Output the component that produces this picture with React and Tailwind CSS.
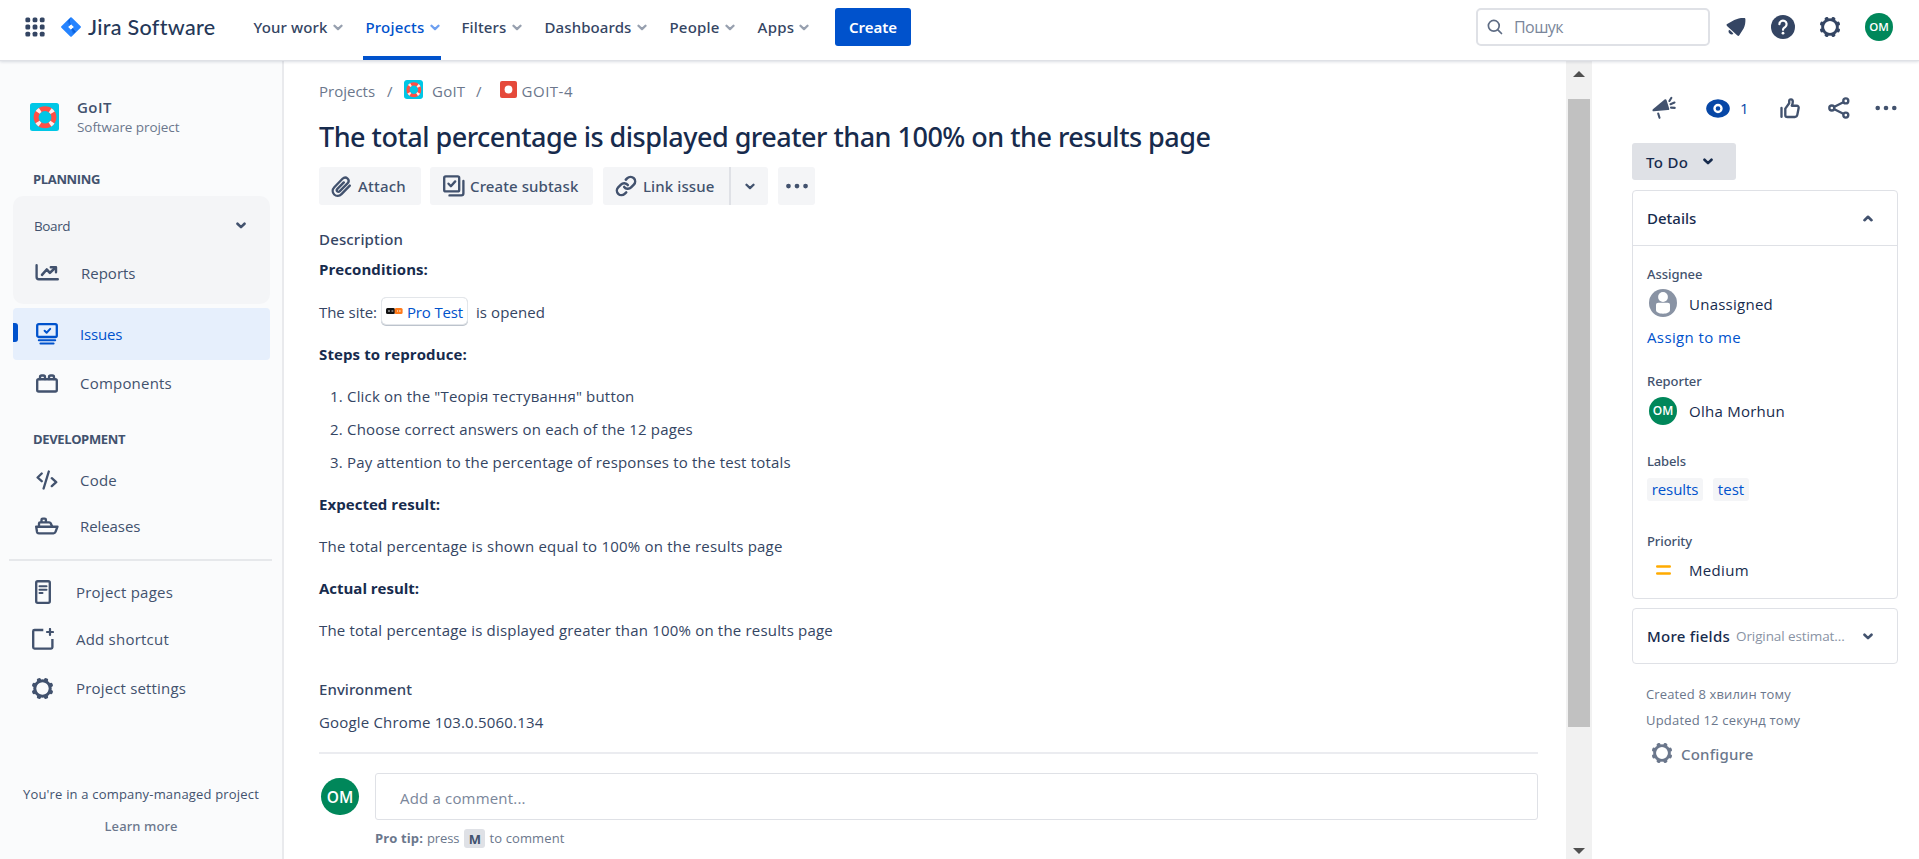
const medium = "font-['Noto_Sans','Open_Sans',sans-serif] font-medium";

function Chevron({ className = "", up = false, strokeWidth = 2.3 }) {
  return (
    <svg width="10" height="7" viewBox="0 0 10 7" fill="none" stroke="currentColor" strokeWidth={strokeWidth} strokeLinecap="round" strokeLinejoin="round" className={`shrink-0 ${className}`}>
      <path d={up ? "M1.5 5.2 5 1.8 8.5 5.2" : "M1.5 1.7 5 5.1 8.5 1.7"} />
    </svg>
  );
}

const teeth = [22.5, 67.5, 112.5, 157.5, 202.5, 247.5, 292.5, 337.5];

function Gear({ size = 22, className = "" }) {
  return (
    <svg width={size} height={size} viewBox="0 0 22 22" fill="none" className={`shrink-0 ${className}`}>
      <circle cx="11" cy="11" r="7.4" stroke="currentColor" strokeWidth="2.9" />
      {teeth.map((a) => (
        <rect key={a} x="9" y="0.5" width="4" height="4.2" rx="1.5" fill="currentColor" transform={`rotate(${a} 11 11)`} />
      ))}
    </svg>
  );
}

function Lifebuoy({ width, height, className = "" }) {
  return (
    <svg width={width} height={height} viewBox="0 0 28 28" preserveAspectRatio="none" className={`shrink-0 ${className}`}>
      <rect width="28" height="28" rx="2.5" fill="#00c7e6" />
      <circle cx="14.5" cy="14.3" r="8.6" fill="none" stroke="#ff4f45" strokeWidth="4.8" />
      <circle cx="14.5" cy="14.3" r="8.6" fill="none" stroke="#ffeeed" strokeWidth="4.8" strokeDasharray="3.4 10.11" transform="rotate(33.7 14.5 14.3)" />
    </svg>
  );
}

function Avatar({ className }) {
  return (
    <div className={`flex shrink-0 items-center justify-center rounded-full bg-[#00875a] font-semibold text-white ${className}`}>OM</div>
  );
}

function Dots({ className = "" }) {
  return (
    <svg width="24" height="8" viewBox="0 0 24 8" fill="currentColor" className={`shrink-0 ${className}`}>
      <circle cx="3" cy="4" r="2.5" />
      <circle cx="12" cy="4" r="2.5" />
      <circle cx="21" cy="4" r="2.5" />
    </svg>
  );
}

const navItems = [
  { label: "Your work", width: "w-[112px]", text: "tracking-[0.13px]" },
  { label: "Projects", width: "w-[96px]", text: "tracking-[0.2px]", active: true },
  { label: "Filters", width: "w-[83px]", text: "tracking-[0.14px]" },
  { label: "Dashboards", width: "w-[125px]", text: "tracking-[0.11px]" },
  { label: "People", width: "w-[88px]", text: "tracking-[0.19px]" },
  { label: "Apps", width: "w-[77px]", text: "tracking-[0.3px]" },
];

function Header() {
  return (
    <header className="relative z-10 flex h-[60px] shrink-0 items-center bg-white pb-[6px] text-[#344563] shadow-[0_1px_1px_#dfe1e6,0_2px_3px_rgba(9,30,66,0.14)]">
      <svg width="20" height="20" viewBox="0 0 20 20" fill="currentColor" className="ml-[25px] shrink-0">
        {[0, 7.2, 14.4].map((y) => [0, 7.2, 14.4].map((x) => <rect key={`${x}-${y}`} x={x + 0.4} y={y + 0.4} width="4.8" height="4.8" rx="1.5" />))}
      </svg>
      <svg width="20" height="20" viewBox="0 0 20 20" className="ml-[16px] shrink-0">
        <defs>
          <linearGradient id="jl" x1="0.9" y1="0.1" x2="0.3" y2="0.8">
            <stop offset="0.2" stopColor="#0052cc" />
            <stop offset="1" stopColor="#2684ff" />
          </linearGradient>
        </defs>
        <path fill="#2684ff" fillRule="evenodd" d="M9.3.5a1 1 0 0 1 1.4 0l8.9 8.8a1 1 0 0 1 0 1.4l-8.9 8.8a1 1 0 0 1-1.4 0L.4 10.7a1 1 0 0 1 0-1.4zM10 7.2 7.2 10l2.8 2.8 2.8-2.8z" />
        <path fill="url(#jl)" d="M10 7.2C8.300 5.500 8.300 2.500 10 .7L5.300 5.200 8.500 8.700z" />
        <path fill="url(#jl)" d="M10 12.800c1.700 1.700 1.700 4.700 0 6.500l4.700-4.500-3.200-3.500z" />
      </svg>
      <div className="ml-[7px] w-[166px] whitespace-nowrap font-['Lato',sans-serif] text-[21.500px] leading-[26px] font-medium tracking-[0.3px] text-[#253858]">Jira Software</div>
      <nav className={`flex h-[54px] items-center text-[15px] ${medium}`}>
        {navItems.map((n) => (
          <div key={n.label} className={`relative flex h-[54px] items-center whitespace-nowrap ${n.width} ${n.active ? "text-[#0052cc]" : ""}`}>
            <span className={`-ml-[0.5px] ${n.text}`}>{n.label}</span>
            <Chevron className={`mt-[1px] ml-[5px] ${n.active ? "text-[#6d9ff0]" : "text-[#97a0af]"}`} />
            {n.active && <span className="absolute top-[56px] -left-[3px] h-[4px] w-[78px] bg-[#0052cc]" />}
          </div>
        ))}
      </nav>
      <button className="h-[38px] w-[76px] shrink-0 rounded-[3px] bg-[#0052cc] font-['Noto_Sans'] text-[15px] font-semibold tracking-[-0.05px] text-white">Create</button>
      <div className="ml-auto flex h-[38px] w-[234px] items-center rounded-[5px] border-2 border-[#dfe1e6] pl-[9px]">
        <svg width="16" height="16" viewBox="0 0 16 16" fill="none" stroke="#5e6c84" strokeWidth="1.7" strokeLinecap="round">
          <circle cx="6.800" cy="6.800" r="5.400" />
          <path d="m10.900 10.900 3.600 3.600" />
        </svg>
        <span className="ml-[11px] text-[16px] leading-5 tracking-[-0.56px] text-[#7a869a]">Пошук</span>
      </div>
      <svg width="20" height="20" viewBox="0 0 20 20" fill="currentColor" className="ml-[16px] shrink-0">
        <path d="M18.200.900c.7 0 1.200.5 1.200 1.200.1 3.500-.3 6.600-1.800 9.300l-4.300 6.900c-.5.7-1.300.8-1.900.2L1 8.900c-.7-.7-.6-1.500.2-1.900L8.300 3C11.300 1.400 14.600.800 18.200.900z" />
        <path d="M2.900 12.700a3.300 3.300 0 0 0 4.500 4.400l-1-1.500-2.100-2z" />
      </svg>
      <svg width="24" height="24" viewBox="0 0 24 24" className="ml-[25px] shrink-0">
        <circle cx="12" cy="12" r="12" fill="#344563" />
        <path d="M8.400 9.200a3.600 3.600 0 1 1 5.700 2.900c-1.300.9-2.100 1.200-2.100 2.700" fill="none" stroke="white" strokeWidth="2.200" strokeLinecap="round" />
        <circle cx="12" cy="18.200" r="1.400" fill="white" />
      </svg>
      <Gear size={22} className="ml-[24px]" />
      <Avatar className="mr-[26px] ml-[24px] size-[28px] text-[11.500px]" />
    </header>
  );
}

function Row({ icon, label, className = "" }) {
  return (
    <div className={`flex items-center whitespace-nowrap ${className}`}>
      {icon}
      <span>{label}</span>
    </div>
  );
}

const line = { fill: "none", stroke: "currentColor", strokeWidth: 2.35, strokeLinecap: "round", strokeLinejoin: "round" };

function Sidebar() {
  return (
    <aside className="flex w-[284px] shrink-0 flex-col border-r-2 border-[#e9eaed] bg-[#fafbfc] text-[15px] leading-5 text-[#42526e]">
      <div className="mt-[37px] flex h-[40px] items-center pl-[30px]">
        <Lifebuoy width={29} height={28} />
        <div className="ml-[18px] whitespace-nowrap">
          <div className="font-semibold tracking-[0.48px]">GoIT</div>
          <div className="text-[13.500px] tracking-[-0.07px] text-[#6b778c]">Software project</div>
        </div>
      </div>
      <div className="mt-[32px] pl-[33px] text-[13px] font-bold tracking-[-0.36px]">PLANNING</div>
      <div className="mt-[7px] ml-[13px] h-[108px] w-[257px] rounded-[10px] bg-[#f4f5f7] pt-[20px]">
        <div className="flex h-[20px] items-center justify-between pr-[24px] pl-[21px] text-[13.500px] tracking-[-0.4px]">
          Board
          <Chevron className="-mt-[2px]" strokeWidth={2.6} />
        </div>
        <Row
          className="mt-[27px] h-[20px] pl-[22px]"
          label="Reports"
          icon={
            <svg width="25" height="18" viewBox="0 0 25 18" className="mr-[21px]" {...line}>
              <path d="M1.600 1.200v11.700c0 1.500.6 2.300 2.200 2.300h19" />
              <path d="m7 10.800 4.700-5.300 3.200 3.400L20 4" strokeWidth="2.600" />
              <path d="M15.800 3.200H21v5" strokeWidth="2.400" />
            </svg>
          }
        />
      </div>
      <div className="mt-[4px] ml-[13px] flex h-[52px] w-[257px] items-center rounded-[4px] bg-[#e6effc] text-[#0052cc]">
        <div className="-mt-[4px] h-[19px] w-[5px] rounded-r-[3px] bg-[#0052cc]" />
        <svg width="22" height="22" viewBox="0 0 22 22" className="ml-[18px]" {...line}>
          <rect x="1.200" y="1.200" width="19.600" height="12.800" rx="1.500" strokeWidth="2.300" />
          <path d="m8.600 7.800 2 1.900 3.600-3.800" strokeWidth="2" />
          <path d="M2.800 17.200h16.400M4.400 20.600h13.200" strokeWidth="2" />
        </svg>
        <span className="ml-[22px] tracking-[-0.15px]">Issues</span>
      </div>
      <Row
        className="h-[46px] pl-[36px] tracking-[0.21px]"
        label="Components"
        icon={
          <svg width="22" height="19" viewBox="0 0 22 19" className="mr-[22px]" {...line}>
            <rect x="1.200" y="5.200" width="19.600" height="12.300" rx="1.500" />
            <path d="M4 5V3.200c0-1.100.7-1.700 1.600-1.700h1.800c1 0 1.600.6 1.600 1.700V5M13 5V3.200c0-1.100.7-1.700 1.600-1.700h1.800c1 0 1.600.6 1.600 1.700V5" />
          </svg>
        }
      />
      <div className="mt-[23px] pl-[33px] text-[13px] font-bold tracking-[-0.37px]">DEVELOPMENT</div>
      <Row
        className="mt-[11px] h-[40px] pl-[36px] tracking-[0.23px]"
        label="Code"
        icon={
          <svg width="22" height="20" viewBox="0 0 22 20" className="mr-[22px]" {...line}>
            <path d="M5.700 3.500 1.600 7.500l4.100 3.700M12.800 1.500 7.600 18.500M15.800 8.200l4.400 4-4.400 3.900" />
          </svg>
        }
      />
      <Row
        className="mt-[3px] h-[46px] pl-[35px] tracking-[-0.08px]"
        label="Releases"
        icon={
          <svg width="24" height="18" viewBox="0 0 24 18" className="mr-[21px]" {...line}>
            <path d="M1.200 9.700h21.300l-2 5.200c-.4 1-1 1.400-2 1.400H3.800c-1 0-1.600-.5-1.800-1.400z" />
            <path d="M4 9.300V6.400c0-.7.4-1.100 1.100-1.100h9.100c.7 0 1.200.3 1.500 1l1.300 3M6.500 5V2.800c0-.8.4-1.200 1.200-1.200h2c.8 0 1.200.4 1.200 1.200V5" />
          </svg>
        }
      />
      <div className="mt-[10px] ml-[9px] h-[2px] w-[263px] bg-[#e6e8eb]" />
      <Row
        className="mt-[11px] h-[40px] pl-[35px] tracking-[0.23px]"
        label="Project pages"
        icon={
          <svg width="16" height="24" viewBox="0 0 16 24" className="mr-[25px]" {...line}>
            <rect x="1.200" y="1.200" width="13.600" height="21.600" rx="1.500" />
            <path d="M4.500 6.300h7M4.500 9.700h7M4.500 13.100h3" strokeWidth="2" />
          </svg>
        }
      />
      <Row
        className="mt-[7px] h-[40px] pl-[32px] tracking-[0.22px]"
        label="Add shortcut"
        icon={
          <svg width="22" height="22" viewBox="0 0 22 22" className="mr-[22px]" {...line}>
            <path d="M11.300 2H2.500C1.700 2 1.200 2.500 1.200 3.300v16c0 .9.4 1.300 1.300 1.300h16.600c.9 0 1.300-.4 1.300-1.300V11" strokeLinecap="butt" />
            <path d="M18 1v6M15 4h6" strokeWidth="2.200" />
          </svg>
        }
      />
      <Row className="mt-[9px] h-[40px] pl-[31px] tracking-[0.17px]" label="Project settings" icon={<Gear size={23} className="mr-[22px]" />} />
      <div className="mt-[76px] text-center text-[13px] tracking-[0.18px] text-[#42526e]">You're in a company-managed project</div>
      <div className={`mt-[12px] text-center text-[13px] tracking-[0.12px] text-[#6b778c] ${medium}`}>Learn more</div>
    </aside>
  );
}

const steps = [
  'Click on the "Теорія тестування" button',
  "Choose correct answers on each of the 12 pages",
  "Pay attention to the percentage of responses to the test totals",
];

function Issue() {
  return (
    <main className="w-[1282px] shrink-0 whitespace-nowrap pl-[35px] text-[15px] leading-5 tracking-[0.18px] text-[#344563]">
      <div className="mt-[21px] flex h-[20px] items-center tracking-[0px] text-[#6b778c]">
        <span>Projects</span>
        <span className="ml-[12px] w-[17px]">/</span>
        <Lifebuoy width={19} height={19} className="-mt-[3px] rounded-[3px]" />
        <span className="ml-[9px] w-[43px] tracking-[0.2px]">GoIT</span>
        <span className="ml-[1px]">/</span>
        <svg width="17" height="17" viewBox="0 0 17 17" className="-mt-[3px] ml-[18px]">
          <rect width="17" height="17" rx="2" fill="#e5493a" />
          <circle cx="8.500" cy="8.500" r="3.900" fill="white" />
        </svg>
        <span className="ml-[5px] tracking-[0.5px]">GOIT-4</span>
      </div>
      <h1 className={`mt-[18px] h-[36px] text-[27px] leading-[36px] tracking-[-0.51px] text-[#172b4d] ${medium}`}>
        The total percentage is displayed greater than 100% on the results page
      </h1>
      <div className={`mt-[12px] flex h-[38px] text-[#42526e] ${medium}`}>
        <div className="flex w-[102px] items-center rounded-[3px] bg-[#f4f5f7] pl-[12px]">
          <svg width="21" height="21" viewBox="0 0 21 21" {...line}>
            <path d="m18.800 9.600-8.300 8.500c-2.200 2.200-5.300 2.200-7.300.4-2-2-2-5.100.1-7.300l8.200-8.400c1.500-1.500 3.600-1.600 5-.3 1.400 1.400 1.400 3.400 0 4.900l-7.700 7.800c-.8.8-1.800.8-2.500.2-.7-.7-.7-1.700.1-2.500l6.400-6.500" />
          </svg>
          <span className="ml-[6px] tracking-[0.22px]">Attach</span>
        </div>
        <div className="ml-[9px] flex w-[163px] items-center rounded-[3px] bg-[#f4f5f7] pl-[13px]">
          <svg width="22" height="22" viewBox="0 0 22 22" {...line}>
            <rect x="1.200" y="1.400" width="15" height="15" rx="1.500" />
            <path d="m5.500 8.700 2.400 2.500 4.300-4.800M20.400 6v12.300c0 1.400-.7 2.100-2.100 2.100H6.500" />
          </svg>
          <span className="ml-[5px] tracking-[0.1px]">Create subtask</span>
        </div>
        <div className="ml-[10px] flex w-[126px] items-center rounded-l-[3px] bg-[#f4f5f7] pl-[12px]">
          <svg width="22" height="22" viewBox="0 0 24 24" {...line} strokeWidth="2.700">
            <path d="M10 13a5 5 0 0 0 7.540.540l3-3a5 5 0 0 0-7.070-7.070l-1.720 1.710" />
            <path d="M14 11a5 5 0 0 0-7.540-.540l-3 3a5 5 0 0 0 7.070 7.070l1.710-1.710" />
          </svg>
          <span className="ml-[6px] tracking-[0.1px]">Link issue</span>
        </div>
        <div className="flex w-[39px] items-center justify-center rounded-r-[3px] border-l-2 border-[#dfe1e6] bg-[#f4f5f7]">
          <Chevron />
        </div>
        <div className="ml-[10px] flex w-[37px] items-center justify-center rounded-[3px] bg-[#f4f5f7]">
          <Dots className="scale-[0.95]" />
        </div>
      </div>
      <div className={`mt-[24px] tracking-[0.16px] ${medium}`}>Description</div>
      <div className="mt-[10px] font-bold tracking-[0.07px] text-[#172b4d]">Preconditions:</div>
      <div className="mt-[18px] flex h-[28px] items-center">
        <span className="mt-[2px] tracking-[-0.05px]">The site:</span>
        <span className="ml-[5px] flex h-[26px] w-[85px] items-center rounded-[4px] pl-[4px] shadow-[0_0_0_1px_#e3e6ea,0_1px_0_1px_#bcc3cc]">
          <svg width="17" height="8" viewBox="0 0 17 8" className="-mt-[1px]">
            <rect x="0" y="1" width="9" height="6" rx="1.500" fill="#111" />
            <rect x="8.600" y="1" width="8" height="6" rx="1.500" fill="#ff7a1a" />
            <path d="M2 4h2M5.500 4h1.800" stroke="#999" strokeWidth="1.500" />
            <path d="M11 4h1M13 4h1.700" stroke="#ffd2a8" strokeWidth="1.500" />
          </svg>
          <span className="mt-[2px] ml-[4px] tracking-[-0.16px] text-[#0052cc]">Pro Test</span>
        </span>
        <span className="mt-[2px] ml-[9px] tracking-[0.08px]">is opened</span>
      </div>
      <div className="mt-[19px] font-bold tracking-[0.12px] text-[#172b4d]">Steps to reproduce:</div>
      <ol className="mt-[15px]">
        {steps.map((s, i) => (
          <li key={s} className="flex h-[33px] items-center pl-[11px]">
            <span className="w-[17px]">{i + 1}.</span>
            <span>{s}</span>
          </li>
        ))}
      </ol>
      <div className="mt-[16px] font-bold tracking-[0.05px] text-[#172b4d]">Expected result:</div>
      <div className="mt-[22px] tracking-[0.21px]">The total percentage is shown equal to 100% on the results page</div>
      <div className="mt-[22px] font-bold tracking-[-0.02px] text-[#172b4d]">Actual result:</div>
      <div className="mt-[22px] tracking-[0.19px]">The total percentage is displayed greater than 100% on the results page</div>
      <div className={`mt-[39px] tracking-[0.06px] ${medium}`}>Environment</div>
      <div className="mt-[13px]">Google Chrome 103.0.5060.134</div>
      <div className="mt-[20px] h-[2px] w-[1219px] bg-[#ebecf0]" />
      <div className="mt-[19px] flex h-[47px] items-center">
        <Avatar className="ml-[2px] h-[37px] w-[38px] text-[15.500px] tracking-[-0.1px]" />
        <div className="ml-[16px] flex h-[47px] w-[1163px] items-center rounded-[3px] border border-[#dfe1e6] pt-[3px] pl-[24px] text-[#7a869a]">Add a comment...</div>
      </div>
      <div className="mt-[8px] flex h-[20px] items-center pl-[56px] text-[13px] tracking-[0.12px] text-[#6b778c]">
        <b>Pro tip:</b>
        <span className="ml-[4px] tracking-[-0.1px]">press</span>
        <span className="mt-[1px] ml-[5px] flex h-[19px] w-[21px] items-center justify-center rounded-[3px] bg-[#dfe1e6] font-bold text-[#42526e]">M</span>
        <span className="ml-[4px]">to comment</span>
      </div>
    </main>
  );
}

function Scrollbar() {
  return (
    <div className="flex w-[26px] shrink-0 flex-col items-center bg-[#f1f1f1] text-[#505050]">
      <svg width="12" height="6" viewBox="0 0 12 6" className="mt-[11px]" fill="currentColor">
        <path d="M6 0 12 6H0z" />
      </svg>
      <div className="mt-[22px] h-[628px] w-[22px] bg-[#c1c1c1]" />
      <svg width="12" height="6" viewBox="0 0 12 6" className="mt-auto mb-[5px]" fill="currentColor">
        <path d="M0 0h12L6 6z" />
      </svg>
    </div>
  );
}

function Details() {
  return (
    <aside className="flex-1 whitespace-nowrap pl-[40px] text-[15px] leading-5 text-[#172b4d]">
      <div className="mt-[36px] flex h-[24px] items-center pl-[20px] text-[#42526e]">
        <svg width="24" height="24" viewBox="0 0 24 24" {...line}>
          <path d="M.9 13.200 12.600 3.500c.8-.6 1.600-.4 1.900.5l2.700 8.400c.3 1-.3 1.600-1.300 1.700L1.900 15.300C.4 15.400 0 14.200.9 13.200z" fill="currentColor" stroke="none" />
          <path d="m6.200 17.500 1.300 4.300M17.400 5l2-3.200M18.500 8.200l4-1.700M19 11.600l3.700.3" strokeWidth="2.100" />
        </svg>
        <svg width="24" height="19" viewBox="0 0 24 19" className="ml-[30px]">
          <ellipse cx="12" cy="9.500" rx="11.800" ry="9.200" fill="#0747a6" />
          <circle cx="12" cy="9.500" r="3.500" fill="none" stroke="white" strokeWidth="2.400" />
        </svg>
        <span className="ml-[10px] w-[11px] text-[#0747a6]">1</span>
        <svg width="20" height="21" viewBox="0 0 20 21" className="ml-[29px]" {...line}>
          <path d="M1.500 10v8.700M5.300 17.200V10.600L9.200 5.300V3.100c0-2.600 3.600-2.300 3.600.6 0 1.500-.4 2.700-1 4h4.800c1.500 0 2.300 1 2 2.500l-1.300 6.700c-.3 1.500-1.100 2.100-2.500 2.100H7.500c-1.400 0-2.200-.7-2.200-1.800z" />
        </svg>
        <svg width="22" height="22" viewBox="0 0 22 22" className="ml-[28px]" {...line}>
          <circle cx="3.800" cy="11" r="2.500" />
          <circle cx="17.800" cy="3.900" r="2.500" />
          <circle cx="17.800" cy="18.100" r="2.500" />
          <path d="m6.400 9.700 8.900-4.500M6.400 12.300l8.900 4.500" />
        </svg>
        <Dots className="ml-[24px] scale-[0.92]" />
      </div>
      <div className="mt-[23px] flex h-[37px] w-[104px] items-center rounded-[3px] bg-[#dfe1e6] pl-[14px]">
        <span className={`w-[57px] tracking-[0.35px] ${medium}`}>To Do</span>
        <Chevron strokeWidth={2.600} />
      </div>
      <section className="mt-[10px] h-[409px] w-[266px] rounded-[4px] border border-[#dfe1e6]">
        <div className="flex h-[55px] items-center justify-between border-b border-[#dfe1e6] pr-[24px] pl-[14px]">
          <span className={medium}>Details</span>
          <Chevron up strokeWidth={2.600} className="text-[#42526e]" />
        </div>
        <div className="pl-[14px]">
          <div className={`mt-[18px] text-[13px] text-[#42526e] tracking-[-0.05px] ${medium}`}>Assignee</div>
          <div className="mt-[5px] flex h-[28px] items-center pl-[2px]">
            <svg width="28" height="28" viewBox="0 0 28 28">
              <circle cx="14" cy="14" r="14" fill="#8993a4" />
              <circle cx="14" cy="8" r="4.900" fill="white" />
              <path d="M7 16c0-1.500.9-2.300 2.300-2.300h9.400c1.400 0 2.300.8 2.300 2.300v5c0 2-2.500 3.700-7 3.700S7 23 7 21z" fill="white" />
            </svg>
            <span className="mt-[2px] ml-[12px] tracking-[0.25px]">Unassigned</span>
          </div>
          <div className="mt-[10px] tracking-[0.38px] text-[#0052cc]">Assign to me</div>
          <div className={`mt-[24px] text-[13px] text-[#42526e] tracking-[-0.05px] ${medium}`}>Reporter</div>
          <div className="mt-[6px] flex h-[28px] items-center pl-[2px]">
            <Avatar className="size-[28px] text-[12px] tracking-normal" />
            <span className="ml-[12px] tracking-[0.26px]">Olha Morhun</span>
          </div>
          <div className={`mt-[26px] text-[13px] text-[#42526e] tracking-[-0.15px] ${medium}`}>Labels</div>
          <div className="mt-[7px] flex h-[23px] gap-[10px] text-[#0052cc]">
            <span className="flex w-[56px] items-center justify-center rounded-[3px] bg-[#f4f5f7] pb-[2px] tracking-[-0.1px]">results</span>
            <span className="flex w-[36px] items-center justify-center rounded-[3px] bg-[#f4f5f7] pb-[2px]">test</span>
          </div>
          <div className={`mt-[30px] text-[13px] text-[#42526e] tracking-[-0.1px] ${medium}`}>Priority</div>
          <div className="mt-[9px] flex h-[20px] items-center">
            <svg width="15" height="10" viewBox="0 0 15 10" className="ml-[9px]" stroke="#ffab00" strokeWidth="2.400" strokeLinecap="round">
              <path d="M1.200 1.500h12.600M1.200 8.500h12.600" />
            </svg>
            <span className="ml-[18px] tracking-[0.34px]">Medium</span>
          </div>
        </div>
      </section>
      <section className="mt-[9px] flex h-[56px] w-[266px] items-center rounded-[4px] border border-[#dfe1e6] pl-[14px]">
        <span className={`w-[84px] tracking-[0.26px] ${medium}`}>More fields</span>
        <span className="ml-[5px] w-[127px] text-[13.500px] tracking-[-0.1px] text-[#8993a4]">Original estimat...</span>
        <Chevron strokeWidth={2.600} className="text-[#42526e]" />
      </section>
      <div className="mt-[20px] pl-[14px] text-[13px] tracking-[0.14px] text-[#6b778c]">
        <div>Created 8 хвилин тому</div>
        <div className="mt-[6px] tracking-[0.2px]">Updated 12 секунд тому</div>
      </div>
      <div className="mt-[14px] flex h-[20px] items-center pl-[19px] text-[#6b778c]">
        <Gear size={22} className="-mt-[2px]" />
        <span className={`ml-[8px] tracking-[0.2px] ${medium}`}>Configure</span>
      </div>
    </aside>
  );
}

export default function App() {
  return (
    <div className="flex h-[859px] w-[1919px] flex-col overflow-hidden bg-white font-['Open_Sans','Noto_Sans',sans-serif]">
      <Header />
      <div className="flex min-h-0 flex-1">
        <Sidebar />
        <Issue />
        <Scrollbar />
        <Details />
      </div>
    </div>
  );
}
